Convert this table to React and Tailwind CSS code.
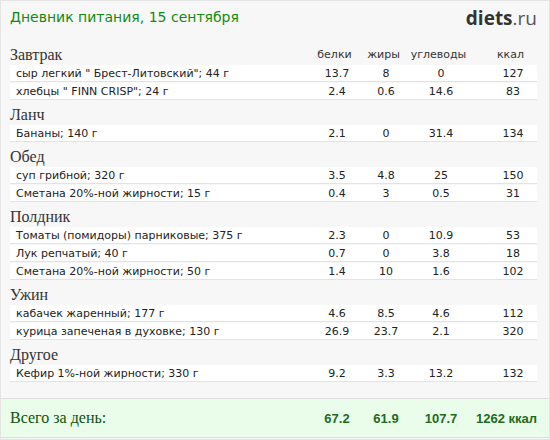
import React from 'react';

const meals = [
  {
    title: 'Завтрак',
    items: [
      ['сыр легкий " Брест-Литовский"; 44 г', '13.7', '8', '0', '127'],
      ['хлебцы " FINN CRISP"; 24 г', '2.4', '0.6', '14.6', '83'],
    ],
  },
  { title: 'Ланч', items: [['Бананы; 140 г', '2.1', '0', '31.4', '134']] },
  {
    title: 'Обед',
    items: [
      ['суп грибной; 320 г', '3.5', '4.8', '25', '150'],
      ['Сметана 20%-ной жирности; 15 г', '0.4', '3', '0.5', '31'],
    ],
  },
  {
    title: 'Полдник',
    items: [
      ['Томаты (помидоры) парниковые; 375 г', '2.3', '0', '10.9', '53'],
      ['Лук репчатый; 40 г', '0.7', '0', '3.8', '18'],
      ['Сметана 20%-ной жирности; 50 г', '1.4', '10', '1.6', '102'],
    ],
  },
  {
    title: 'Ужин',
    items: [
      ['кабачек жаренный; 177 г', '4.6', '8.5', '4.6', '112'],
      ['курица запеченая в духовке; 130 г', '26.9', '23.7', '2.1', '320'],
    ],
  },
  { title: 'Другое', items: [['Кефир 1%-ной жирности; 330 г', '9.2', '3.3', '13.2', '132']] },
];

const sans = { fontFamily: '"DejaVu Sans", Verdana, sans-serif' };

const Cols = ({ values, className = '' }) => (
  <>
    <div className={`w-[50px] text-center ${className}`}>{values[0]}</div>
    <div className={`w-[48px] text-center ${className}`}>{values[1]}</div>
    <div className={`w-[62px] text-center ${className}`}>{values[2]}</div>
    <div className={`w-[65px] pl-[17px] text-center ${className}`}>{values[3]}</div>
  </>
);

const Row = ({ item }) => (
  <div className="mb-px flex h-[17px] items-center border-b border-[#e3e3e3] bg-white text-[11px] leading-none text-[#222]">
    <div className="flex-1 truncate pl-[6px]">{item[0]}</div>
    <Cols values={item.slice(1)} />
  </div>
);

const MealHeader = ({ title, showColumns }) => (
  <div className="flex h-[24px] items-center pt-[3px]">
    <div className="flex-1 text-[16px] leading-none text-[#333] font-['Liberation_Serif',serif]">{title}</div>
    {showColumns && (
      <div className="flex text-[11px] leading-none text-[#333]">
        <Cols values={['белки', 'жиры', 'углеводы', 'ккал']} className="pr-[5px]" />
      </div>
    )}
  </div>
);

export default function App() {
  return (
    <div className="flex h-[440px] w-[550px] flex-col border border-[#e4e4e4] bg-[#f7f7f7]" style={sans}>
      <div className="flex h-[40px] items-start justify-between pl-[9px] pr-[12px] pt-[7px]">
        <div className="text-[14px] leading-[18px] text-[#118a11]">Дневник питания, 15 сентября</div>
        <div className="text-[19px] leading-[20px] text-[#333] font-['Open_Sans',sans-serif]">
          <span className="font-bold">diets</span>
          <span className="text-[#555]">.ru</span>
        </div>
      </div>

      <div className="pl-[9px] pr-[12px]">
        {meals.map((meal, i) => (
          <div key={meal.title}>
            <MealHeader title={meal.title} showColumns={i === 0} />
            {meal.items.map((item) => (
              <Row key={item[0]} item={item} />
            ))}
          </div>
        ))}
      </div>

      <div className="mt-auto mb-px flex h-[40px] items-center border-t border-b border-[#dedede] bg-[#eafdea] pl-[9px] pr-[12px]">
        <div className="flex-1 text-[16px] leading-none text-[#0b520b] font-['Liberation_Serif',serif]">Всего за день:</div>
        <div className="flex items-center text-[13px] font-bold leading-none text-[#1e6b1e] font-['Liberation_Sans',sans-serif]">
          <div className="w-[50px] text-center">67.2</div>
          <div className="w-[48px] text-center">61.9</div>
          <div className="w-[62px] text-center">107.7</div>
          <div className="w-[65px] text-right">1262 ккал</div>
        </div>
      </div>
    </div>
  );
}
